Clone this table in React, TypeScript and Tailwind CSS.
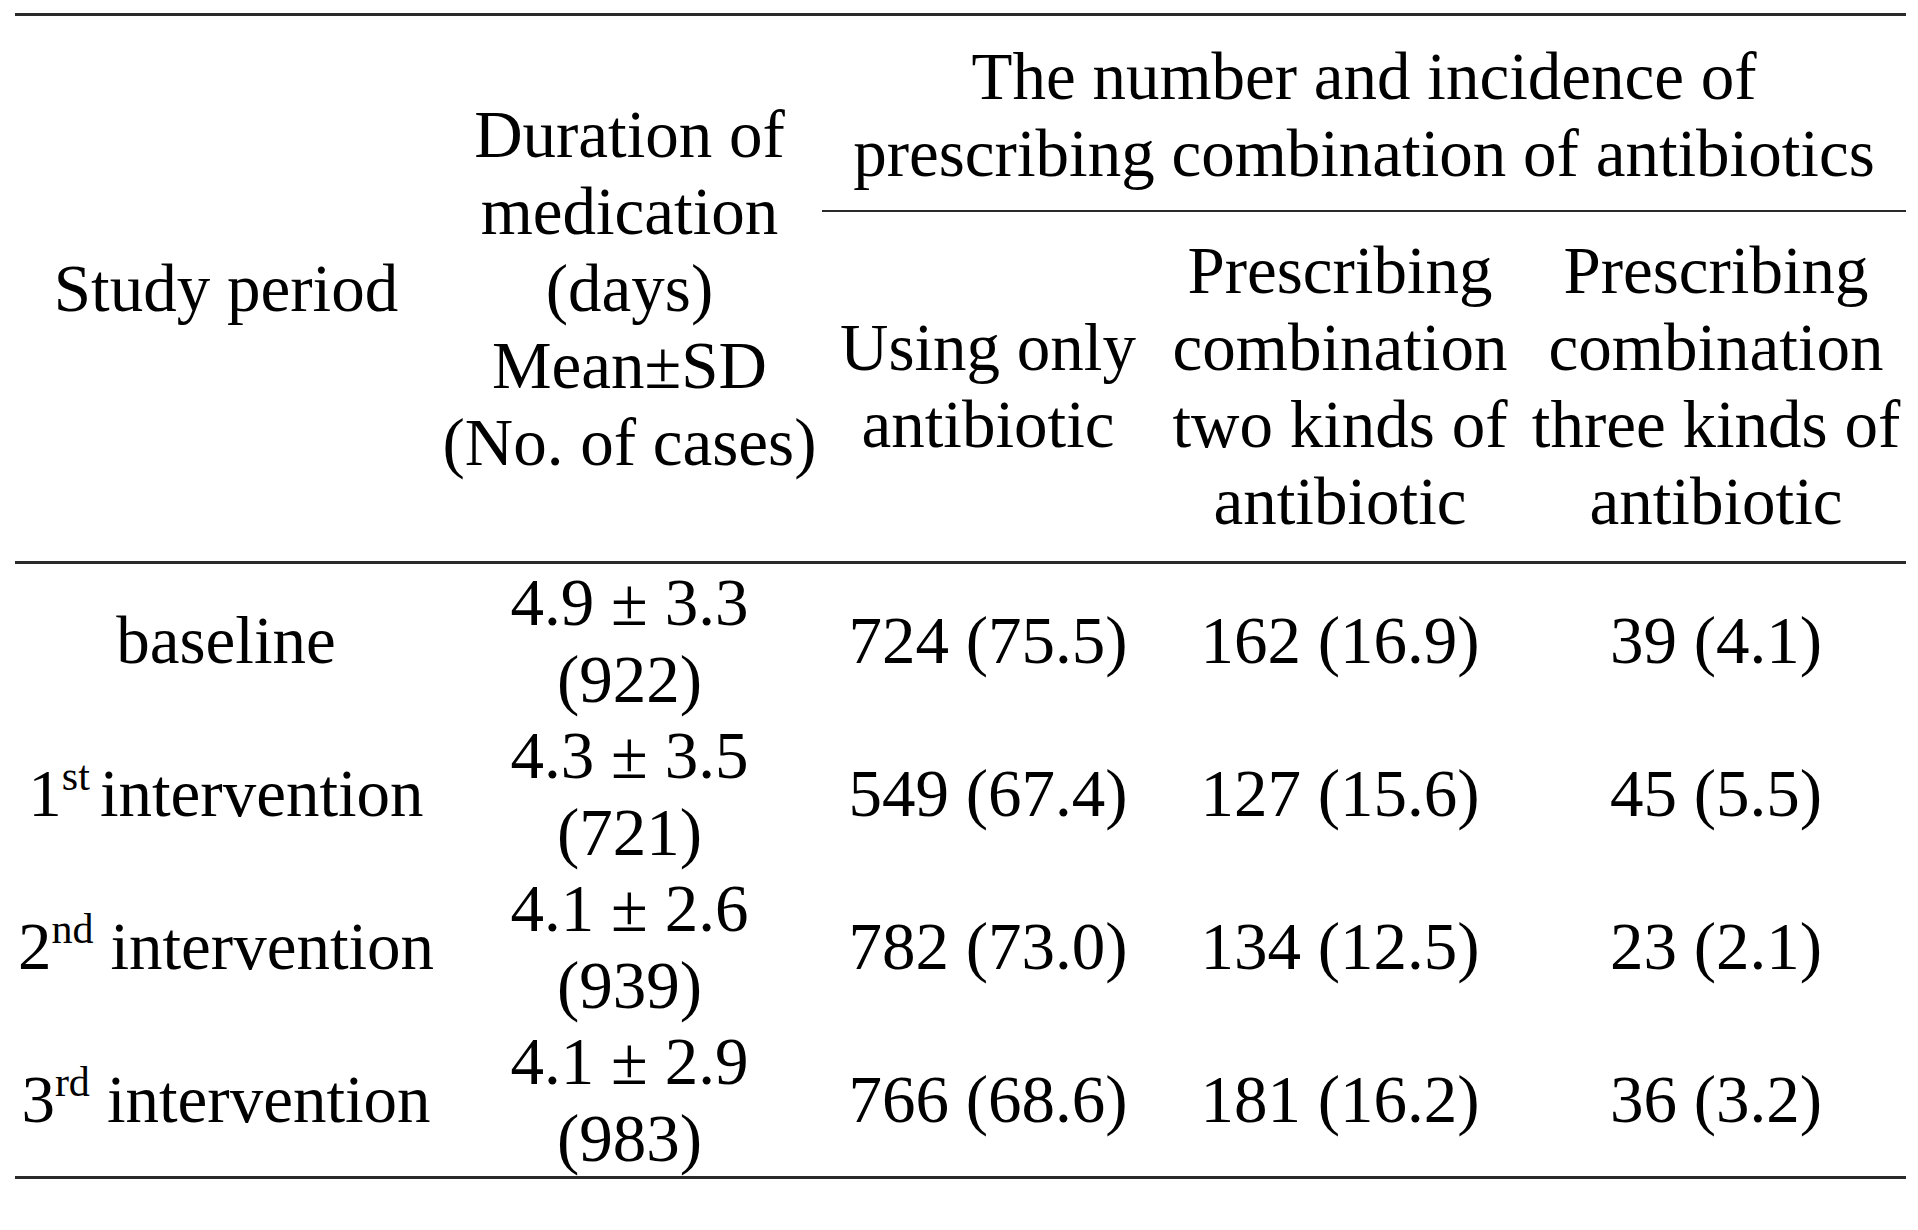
const rows = [
  { period: '', sup: '', gap: '', label: 'baseline', mean: '4.9 ± 3.3', n: '(922)', one: '724 (75.5)', two: '162 (16.9)', three: '39 (4.1)' },
  { period: '1', sup: 'st', gap: 'mr-[10px]', label: 'intervention', mean: '4.3 ± 3.5', n: '(721)', one: '549 (67.4)', two: '127 (15.6)', three: '45 (5.5)' },
  { period: '2', sup: 'nd', gap: 'mr-[17px]', label: 'intervention', mean: '4.1 ± 2.6', n: '(939)', one: '782 (73.0)', two: '134 (12.5)', three: '23 (2.1)' },
  { period: '3', sup: 'rd', gap: 'mr-[17px]', label: 'intervention', mean: '4.1 ± 2.9', n: '(983)', one: '766 (68.6)', two: '181 (16.2)', three: '36 (3.2)' },
];

export default function App() {
  return (
    <div className="min-h-[1230px] w-[1918px] bg-white pl-[15px] pt-[13px] font-['Liberation_Serif',serif] text-[67px] leading-[77px] text-black">
      <table className="w-[1891px] table-fixed border-collapse">
        <colgroup>
          <col className="w-[422px]" />
          <col className="w-[385px]" />
          <col className="w-[332px]" />
          <col className="w-[372px]" />
          <col className="w-[380px]" />
        </colgroup>
        <thead>
          <tr className="border-t-[3px] border-[#2a2a2a]">
            <th rowSpan={2} className="border-b-[3px] border-[#2a2a2a] p-0 text-center align-middle font-normal whitespace-nowrap">
              Study period
            </th>
            <th rowSpan={2} className="border-b-[3px] border-[#2a2a2a] p-0 text-center align-middle font-normal whitespace-nowrap">
              Duration of
              <br />
              medication
              <br />
              (days)
              <br />
              Mean±SD
              <br />
              (No. of cases)
            </th>
            <th colSpan={3} className="border-b-[2px] border-[#2a2a2a] pt-[22px] pb-[18px] text-center align-middle font-normal whitespace-nowrap">
              The number and incidence of
              <br />
              prescribing combination of antibiotics
            </th>
          </tr>
          <tr>
            <th className="border-b-[3px] border-[#2a2a2a] pt-[20px] pb-[21px] text-center align-middle font-normal whitespace-nowrap">
              Using only
              <br />
              antibiotic
            </th>
            <th className="border-b-[3px] border-[#2a2a2a] pt-[20px] pb-[21px] text-center align-middle font-normal whitespace-nowrap">
              Prescribing
              <br />
              combination
              <br />
              two kinds of
              <br />
              antibiotic
            </th>
            <th className="border-b-[3px] border-[#2a2a2a] pt-[20px] pb-[21px] text-center align-middle font-normal whitespace-nowrap">
              Prescribing
              <br />
              combination
              <br />
              three kinds of
              <br />
              antibiotic
            </th>
          </tr>
        </thead>
        <tbody className="border-b-[3px] border-[#2a2a2a] leading-[76.5px]">
          {rows.map((r, i) => (
            <tr key={i}>
              <td className="p-0 text-center align-middle whitespace-nowrap">
                {r.period}
                {r.sup && <span className={`relative -top-[26px] text-[42px] leading-none ${r.gap}`}>{r.sup}</span>}
                {r.label}
              </td>
              <td className="p-0 text-center align-middle whitespace-nowrap">
                {r.mean}
                <br />
                {r.n}
              </td>
              <td className="p-0 text-center align-middle whitespace-nowrap">{r.one}</td>
              <td className="p-0 text-center align-middle whitespace-nowrap">{r.two}</td>
              <td className="p-0 text-center align-middle whitespace-nowrap">{r.three}</td>
            </tr>
          ))}
        </tbody>
      </table>
    </div>
  );
}
